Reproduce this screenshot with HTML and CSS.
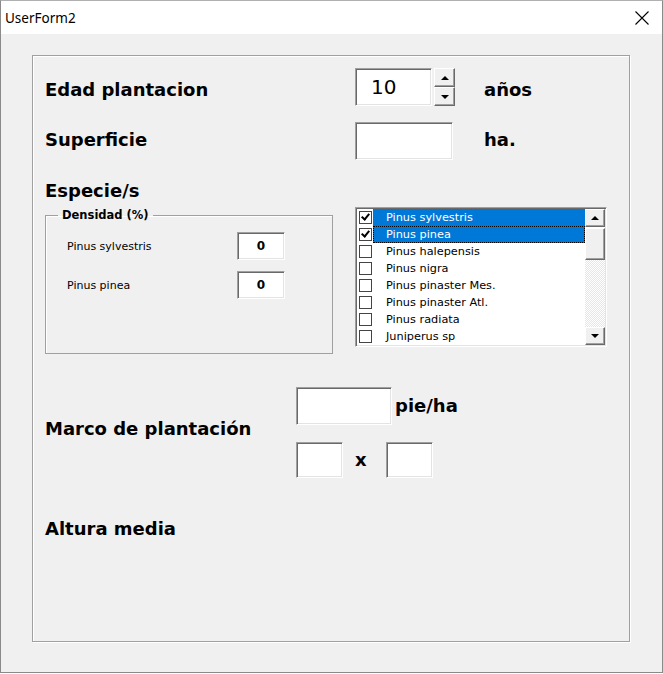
FILE: index.html
```html
<!DOCTYPE html>
<html>

<head>
    <meta charset="UTF-8">
    <title>UserForm2</title>
    <link rel="stylesheet" href="styles.css">
</head>

<body>
    <div class="window">
        <div class="titlebar">
            <span class="title">UserForm2</span>
            <svg class="close" width="14" height="14" viewBox="0 0 14 14">
                <path d="M0.5 0.5 L13.5 13.5 M13.5 0.5 L0.5 13.5" stroke="#000" stroke-width="1.1" fill="none" />
            </svg>
        </div>
        <div class="client">
            <div class="frame">
                <div class="row row-edad">
                    <span class="big label">Edad plantacion</span>
                    <div class="textbox edad">10</div>
                    <div class="spin">
                        <div class="spinbtn"><span class="arrow up"></span></div>
                        <div class="spinbtn"><span class="arrow down"></span></div>
                    </div>
                    <span class="big unit">años</span>
                </div>
                <div class="row row-sup">
                    <span class="big label">Superficie</span>
                    <div class="textbox sup"></div>
                    <span class="big unit ha">ha.</span>
                </div>
                <div class="especie big">Especie/s</div>
                <div class="species">
                    <fieldset class="densidad">
                        <legend>Densidad (%)</legend>
                        <div class="drow first">
                            <span class="dlabel">Pinus sylvestris</span>
                            <div class="textbox small">0</div>
                        </div>
                        <div class="drow">
                            <span class="dlabel">Pinus pinea</span>
                            <div class="textbox small">0</div>
                        </div>
                    </fieldset>
                    <div class="listbox">
                        <ul class="items">
                            <li class="sel"><span class="check on"></span><span class="name">Pinus sylvestris</span></li>
                            <li class="sel focus"><span class="check on"></span><span class="name">Pinus pinea</span></li>
                            <li><span class="check"></span><span class="name">Pinus halepensis</span></li>
                            <li><span class="check"></span><span class="name">Pinus nigra</span></li>
                            <li><span class="check"></span><span class="name">Pinus pinaster Mes.</span></li>
                            <li><span class="check"></span><span class="name">Pinus pinaster Atl.</span></li>
                            <li><span class="check"></span><span class="name">Pinus radiata</span></li>
                            <li><span class="check"></span><span class="name">Juniperus sp</span></li>
                        </ul>
                        <div class="scrollbar">
                            <div class="sbtn"><span class="arrow up"></span></div>
                            <div class="thumb"></div>
                            <div class="track"></div>
                            <div class="sbtn"><span class="arrow down"></span></div>
                        </div>
                    </div>
                </div>
                <div class="marco">
                    <span class="big label marco-label">Marco de plantación</span>
                    <div class="marco-right">
                        <div class="mrow">
                            <div class="textbox pie"></div>
                            <span class="big pie-unit">pie/ha</span>
                        </div>
                        <div class="mrow second">
                            <div class="textbox box"></div>
                            <span class="big times">x</span>
                            <div class="textbox box"></div>
                        </div>
                    </div>
                </div>
                <div class="altura big">Altura media</div>
            </div>
        </div>
    </div>
</body>

</html>
```

FILE: styles.css
```css
body {
    margin: 0;
    background: #fff;
    font-family: "DejaVu Sans", sans-serif;
}

.window {
    width: 663px;
    height: 673px;
    box-sizing: border-box;
    border: 1px solid #8a8a8a;
    border-top-color: #b0b0b0;
    background: #f0f0f0;
    display: flex;
    flex-direction: column;
}

.titlebar {
    height: 33px;
    background: #fff;
    display: flex;
    align-items: center;
    justify-content: space-between;
    padding: 0 13px 0 4px;
}

.title {
    font-family: "Noto Sans", sans-serif;
    font-size: 13.5px;
    color: #000;
}

.client {
    flex: 1;
    padding: 21px 0 0 31px;
}

.frame {
    width: 598px;
    height: 587px;
    box-sizing: border-box;
    border: 1px solid #a0a0a0;
    box-shadow: inset 1px 1px #fff, 1px 1px #fff;
    padding: 12px 0 0 12px;
}

.big {
    font-size: 18px;
    font-weight: bold;
    color: #000;
    line-height: 22px;
}

.row {
    display: flex;
    align-items: center;
    height: 38px;
}

.row .label {
    width: 310px;
}

.row-edad .label,
.row-edad .unit {
    margin-top: 6px;
}

.row-sup {
    margin-top: 16px;
}

.row-sup .label,
.row-sup .unit {
    margin-top: -2px;
}

.textbox {
    box-sizing: border-box;
    background: #fff;
    border: 1px solid;
    border-color: #a0a0a0 #fff #fff #a0a0a0;
    box-shadow: inset 1px 1px #696969, inset -1px -1px #e3e3e3;
}

.edad {
    width: 77px;
    height: 38px;
    font-size: 20px;
    line-height: 36px;
    padding-left: 15px;
}

.spin {
    margin-left: 2px;
    display: flex;
    flex-direction: column;
}

.spinbtn,
.sbtn {
    box-sizing: border-box;
    background: #f0f0f0;
    border: 1px solid;
    border-color: #fff #696969 #696969 #fff;
    box-shadow: inset -1px -1px #a0a0a0;
    display: flex;
    align-items: center;
    justify-content: center;
}

.spinbtn {
    width: 21px;
    height: 19px;
}

.arrow {
    width: 0;
    height: 0;
    border-left: 4px solid transparent;
    border-right: 4px solid transparent;
}

.arrow.up {
    border-bottom: 4px solid #000;
}

.arrow.down {
    border-top: 4px solid #000;
}

.unit {
    margin-left: 29px;
}

.sup {
    width: 98px;
    height: 38px;
}

.ha {
    margin-left: 31px;
}

.especie {
    margin-top: 20px;
}

.species {
    display: flex;
    margin-top: 5px;
}

.densidad {
    margin: 0;
    padding: 0 0 0 21px;
    width: 288px;
    height: 147px;
    box-sizing: border-box;
    border: 1px solid #a0a0a0;
    box-shadow: inset 1px 1px #fff;
}

.densidad legend {
    margin-left: -9px;
    padding: 0 4px;
    font-size: 11.5px;
    font-weight: bold;
    line-height: 16px;
}

.drow {
    display: flex;
    align-items: center;
    height: 28px;
    margin-top: 11px;
}

.drow.first {
    margin-top: 9px;
}

.dlabel {
    width: 170px;
    font-size: 11px;
}

.small {
    width: 48px;
    height: 28px;
    font-size: 12px;
    font-weight: bold;
    text-align: center;
    line-height: 27px;
}

.listbox {
    margin-left: 22px;
    width: 252px;
    height: 140px;
    box-sizing: border-box;
    border: 1px solid;
    border-color: #a0a0a0 #fff #fff #a0a0a0;
    box-shadow: inset 1px 1px #696969, inset -1px -1px #e3e3e3;
    background: #fff;
    display: flex;
    padding: 1px;
}

.items {
    list-style: none;
    margin: 0;
    padding: 0;
    flex: 1;
}

.items li {
    height: 17px;
    display: flex;
    align-items: center;
    font-size: 11.3px;
    color: #000;
}

.check {
    width: 13px;
    height: 13px;
    box-sizing: border-box;
    margin: 0 1px 0 2px;
    border: 1px solid #444;
    background: #fff;
    position: relative;
}

.check.on::after {
    content: "";
    position: absolute;
    left: 3px;
    top: 0px;
    width: 3px;
    height: 6px;
    border: solid #000;
    border-width: 0 2px 2px 0;
    transform: rotate(40deg);
}

.name {
    flex: 1;
    height: 17px;
    line-height: 17px;
    padding-left: 13px;
    box-sizing: border-box;
}

.sel .name {
    background: #0078d7;
    color: #fff;
}

.focus .name {
    outline: 1px dotted #000;
    outline-offset: -1px;
}

.scrollbar {
    width: 20px;
    display: flex;
    flex-direction: column;
}

.sbtn {
    height: 18px;
}

.thumb {
    height: 32px;
    margin-top: 1px;
    box-sizing: border-box;
    background: #f0f0f0;
    border: 1px solid;
    border-color: #fff #696969 #696969 #fff;
    box-shadow: inset -1px -1px #a0a0a0;
}

.track {
    flex: 1;
    background: repeating-conic-gradient(#fff 0 25%, #e6e6e6 0 50%) 0 0 / 2px 2px;
}

.marco {
    display: flex;
    margin-top: 33px;
}

.marco-label {
    width: 251px;
    align-self: center;
    margin-bottom: 7px;
}

.mrow {
    display: flex;
    align-items: center;
}

.mrow.second {
    margin-top: 17px;
}

.pie {
    width: 96px;
    height: 38px;
}

.pie-unit {
    margin-left: 3px;
}

.box {
    width: 47px;
    height: 36px;
}

.times {
    margin: 0 19px 0 12px;
}

.altura {
    margin-top: 40px;
}
```
